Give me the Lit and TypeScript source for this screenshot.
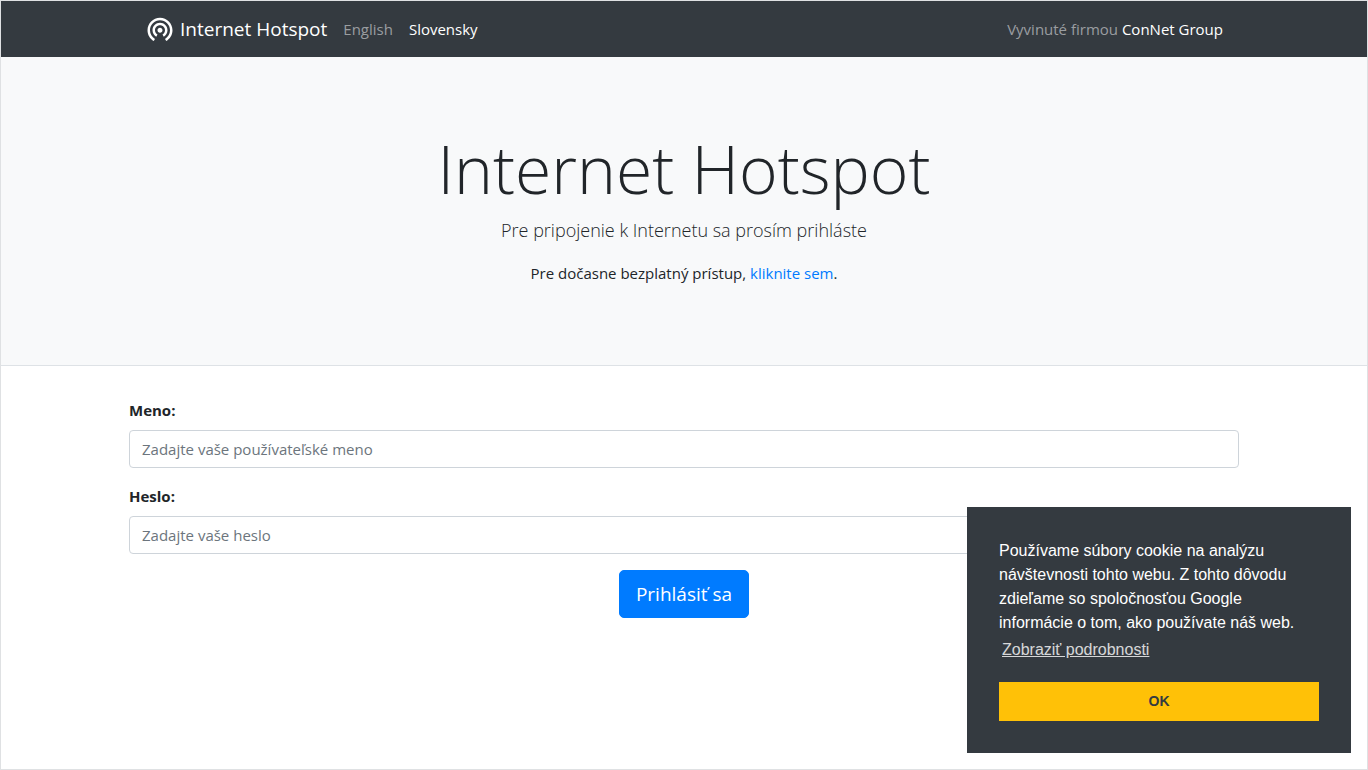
import { LitElement, html, css } from "lit";
import { customElement, state } from "lit/decorators.js";

@customElement("site-navbar")
class SiteNavbar extends LitElement {
  static styles = css`
    :host {
      display: block;
      background: #343a40;
      color: #fff;
    }
    .inner {
      box-sizing: border-box;
      max-width: 1110px;
      min-height: 56px;
      margin: 0 auto;
      padding: 8px 16px;
      display: flex;
      align-items: center;
      gap: 16px;
    }
    a {
      color: inherit;
      text-decoration: none;
    }
    .brand {
      display: flex;
      align-items: center;
      gap: 5px;
      font-size: 19px;
      line-height: 30px;
    }
    .logo {
      width: 30px;
      height: 30px;
      fill: #fff;
    }
    .links {
      display: flex;
      gap: 16px;
    }
    .muted {
      color: #9a9da0;
    }
    .credit {
      margin-left: auto;
    }
  `;

  render() {
    return html`
      <nav class="inner">
        <a class="brand" href="#">
          <svg class="logo" viewBox="0 0 24 24" aria-hidden="true">
            <path
              d="M12 11c-1.1 0-2 .9-2 2s.9 2 2 2 2-.9 2-2-.9-2-2-2zm6 2c0-3.31-2.69-6-6-6s-6 2.69-6 6c0 2.22 1.21 4.15 3 5.19l1-1.74c-1.19-.7-2-1.97-2-3.45 0-2.21 1.79-4 4-4s4 1.79 4 4c0 1.48-.81 2.75-2 3.45l1 1.74c1.79-1.04 3-2.97 3-5.19zM12 3C6.48 3 2 7.48 2 13c0 3.7 2.01 6.92 4.99 8.65l1-1.73C5.61 18.53 4 15.96 4 13c0-4.42 3.58-8 8-8s8 3.58 8 8c0 2.96-1.61 5.53-4 6.92l1 1.73c2.99-1.73 5-4.95 5-8.65 0-5.52-4.48-10-10-10z"
            ></path>
          </svg>
          <span>Internet Hotspot</span>
        </a>
        <div class="links">
          <a class="muted" href="#en">English</a>
          <a href="#sk">Slovensky</a>
        </div>
        <div class="credit">
          <span class="muted">Vyvinuté firmou</span>
          <a href="#connet">ConNet Group</a>
        </div>
      </nav>
    `;
  }
}

@customElement("login-form")
class LoginForm extends LitElement {
  static styles = css`
    :host {
      display: block;
      box-sizing: border-box;
      max-width: 1110px;
      margin: 32px auto 0;
    }
    form {
      display: grid;
      gap: 16px;
    }
    .field {
      display: grid;
      gap: 8px;
    }
    label {
      font-weight: 700;
    }
    input {
      box-sizing: border-box;
      width: 100%;
      height: 38px;
      padding: 6px 12px;
      border: 1px solid #ced4da;
      border-radius: 4px;
      background: #fff;
      color: #495057;
      font: inherit;
    }
    input::placeholder {
      color: #6c757d;
      opacity: 1;
    }
    button {
      justify-self: center;
      padding: 8px 16px;
      border: 1px solid #007bff;
      border-radius: 5px;
      background: #007bff;
      color: #fff;
      font: inherit;
      font-size: 19px;
      line-height: 30px;
      cursor: pointer;
    }
  `;

  render() {
    return html`
      <form @submit=${(e: Event) => e.preventDefault()}>
        <div class="field">
          <label for="name">Meno:</label>
          <input id="name" type="text" placeholder="Zadajte vaše používateľské meno" />
        </div>
        <div class="field">
          <label for="password">Heslo:</label>
          <input id="password" type="password" placeholder="Zadajte vaše heslo" />
        </div>
        <button type="submit">Prihlásiť sa</button>
      </form>
    `;
  }
}

@customElement("cookie-notice")
class CookieNotice extends LitElement {
  static styles = css`
    :host {
      box-sizing: border-box;
      display: block;
      width: 384px;
      max-width: 100%;
      padding: 32px;
      background: #343a40;
      color: #fff;
      font: 16px/24px "Liberation Sans", Arial, sans-serif;
    }
    .message {
      margin: 0 0 17px;
    }
    a {
      display: inline-block;
      padding: 3px;
      color: #fff;
      opacity: 0.8;
      text-decoration: underline;
    }
    button {
      display: block;
      width: 100%;
      padding: 6px 12px;
      border: 2px solid #ffc107;
      background: #ffc107;
      color: #343a40;
      font: inherit;
      font-size: 14px;
      font-weight: 700;
      line-height: 23px;
      cursor: pointer;
    }
  `;

  private dismiss() {
    this.dispatchEvent(new CustomEvent("dismiss"));
  }

  render() {
    return html`
      <p class="message">
        Používame súbory cookie na analýzu návštevnosti tohto webu. Z tohto dôvodu
        zdieľame so spoločnosťou Google informácie o tom, ako používate náš web.
        <a href="#cookies">Zobraziť podrobnosti</a>
      </p>
      <button type="button" @click=${this.dismiss}>OK</button>
    `;
  }
}

@customElement("app-root")
class AppRoot extends LitElement {
  static styles = css`
    :host {
      box-sizing: border-box;
      display: block;
      min-height: 100vh;
      border: 1px solid #dfe1e3;
      background: #fff;
      color: #212529;
      font: 15px/24px "Open Sans", "Noto Sans", sans-serif;
    }
    .hero {
      padding: 64px 32px;
      border-bottom: 1px solid #dee2e6;
      background: #f8f9fa;
      text-align: center;
    }
    h1 {
      margin: 0;
      font-size: 66px;
      font-weight: 300;
      line-height: 94px;
    }
    .lead {
      margin: 0 0 16px;
      font-size: 18px;
      font-weight: 300;
      line-height: 30px;
    }
    .free {
      margin: 0 0 16px;
    }
    .free a {
      color: #007bff;
      text-decoration: none;
    }
    .notice {
      position: fixed;
      right: 17px;
      bottom: 17px;
    }
  `;

  @state() private noticeOpen = true;

  render() {
    return html`
      <site-navbar></site-navbar>
      <header class="hero">
        <h1>Internet Hotspot</h1>
        <p class="lead">Pre pripojenie k Internetu sa prosím prihláste</p>
        <p class="free">Pre dočasne bezplatný prístup, <a href="#free">kliknite sem</a>.</p>
      </header>
      <login-form></login-form>
      ${this.noticeOpen
        ? html`<cookie-notice class="notice" @dismiss=${() => (this.noticeOpen = false)}></cookie-notice>`
        : null}
    `;
  }
}
